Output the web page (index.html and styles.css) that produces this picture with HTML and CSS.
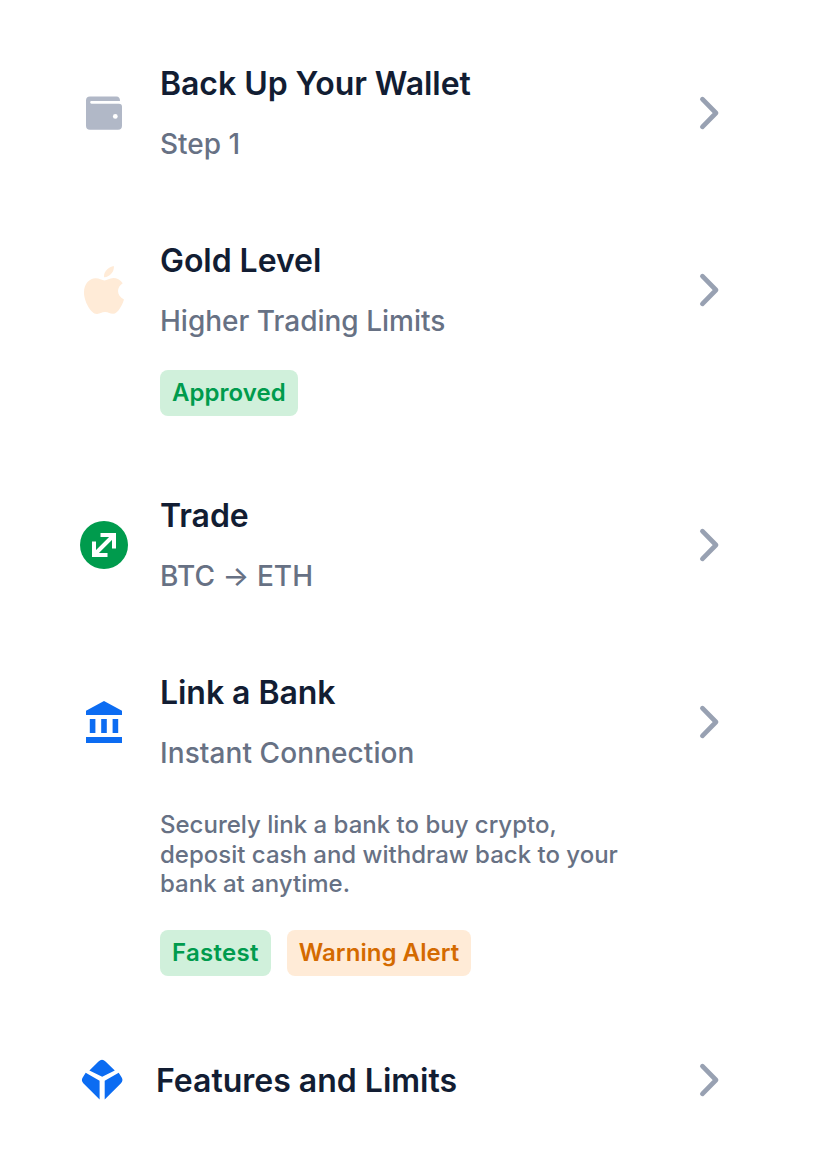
FILE: index.html
```html
<!DOCTYPE html>
<html lang="en">
<head>
<meta charset="utf-8">
<title>Wallet actions</title>
<link rel="stylesheet" href="styles.css">
</head>
<body>
<svg class="defs" width="0" height="0"><symbol id="chevron" viewBox="0 0 24 36"><path d="M6.4 4.2L20 18L6.4 31.8" fill="none" stroke="#98a1b2" stroke-width="4.7" stroke-linecap="round" stroke-linejoin="round"/></symbol></svg>
<main class="list">
  <section class="row">
    <svg class="icon" viewBox="0 0 48 48"><path fill="#b1b8c7" d="M10 7.4h26.500Q40 7.400 40 12H11.500a1.350 1.350 0 0 0 0 2.700H39a3 3 0 0 1 3 3v19a4 4 0 0 1-4 4H10a4 4 0 0 1-4-4V11.400a4 4 0 0 1 4-4z"/><circle cx="35.3" cy="27.4" r="2.4" fill="#fff"/></svg>
    <div class="body"><h2>Back Up Your Wallet</h2><p class="sub">Step 1</p></div>
    <svg class="chevron"><use href="#chevron"/></svg>
  </section>
  <section class="row tagged">
    <svg class="icon" viewBox="0 0 48 48"><path fill="#ffebd7" d="M33.8 0C34.7 5.500 29.500 11.500 24.100 11.200C23.300 5.800 28.500.700 33.800 0zM42.700 17.200C36 21.500 36.600 30.200 44 33.400C42.500 38.500 37.900 47.700 33.100 47.800C30 47.900 28.700 46 25.100 46C21.500 46 20 47.800 17.100 48C11 48.200 4 35.500 4 26.500C4 17.500 9.700 12.400 15.500 12.300C19.100 12.200 22 14.500 24.500 14.500C26.900 14.500 29.500 12 33.500 12C36.500 12 40.500 13.700 42.700 17.200z"/></svg>
    <div class="body"><h2>Gold Level</h2><p class="sub">Higher Trading Limits</p><div class="tags"><span class="tag success">Approved</span></div></div>
    <svg class="chevron"><use href="#chevron"/></svg>
  </section>
  <section class="row">
    <svg class="icon" viewBox="0 0 48 48"><circle cx="24" cy="24" r="24" fill="#009b4d"/><path d="M20.500 14h13.500v13.500M14 20.500v13.500h13.500M14.500 33.500L33.500 14.500" fill="none" stroke="#fff" stroke-width="4"/></svg>
    <div class="body"><h2>Trade</h2><p class="sub wide">BTC → ETH</p></div>
    <svg class="chevron"><use href="#chevron"/></svg>
  </section>
  <section class="row linked">
    <svg class="icon" viewBox="0 0 48 48"><path fill="#0c6cf2" d="M24 3l18 9.700V17H6v-4.300zM9.800 21h5.600v14H9.800zM21.200 21h5.600v14h-5.600zM32.600 21h5.600v14h-5.600zM6 39h36v6H6z"/></svg>
    <div class="body"><h2>Link a Bank</h2><p class="sub wide">Instant Connection</p><p class="text">Securely link a bank to buy crypto, deposit cash and withdraw back to your bank at anytime.</p><div class="tags"><span class="tag success compact">Fastest</span><span class="tag warning">Warning Alert</span></div></div>
    <svg class="chevron"><use href="#chevron"/></svg>
  </section>
  <section class="row simple">
    <svg class="icon" viewBox="0 0 44 48"><path fill="#0c6cf2" d="M9.400 14.600L18.500 5.400Q22 2 25.500 5.400L34.800 14.600L22.200 20.700zM5.700 16.700L19.600 24.700V43.400L3.300 27.200Q.800 24.400 2.700 21.500zM38.700 16.700L24.700 24.700V43.400L41 27.200Q43.500 24.400 41.700 21.500z"/></svg>
    <div class="body"><h2>Features and Limits</h2></div>
    <svg class="chevron"><use href="#chevron"/></svg>
  </section>
</main>
</body>
</html>
```
FILE: styles.css
```css
* { box-sizing: border-box; }
body { margin: 0; background: #fff; font-family: Inter, sans-serif; }
.defs { position: absolute; }
.list { display: flex; flex-direction: column; padding: 60px 94px 0 80px; gap: 69px; }
.row { display: flex; align-items: flex-start; }
.icon { width: 48px; height: 48px; margin: 29px 32px 0 0; flex: none; }
.body { width: 480px; }
h2 { margin: 0; font-size: 32px; line-height: 48px; font-weight: 600; letter-spacing: -0.05px; color: #121d33; white-space: nowrap; }
.sub { margin: 12px 0 0; font-size: 28px; line-height: 48px; color: #677184; font-weight: 500; }
.sub.wide { letter-spacing: 0.08px; }
.text { margin: 33px 0 0; font-size: 24px; line-height: 29.5px; color: #677184; font-weight: 500; }
.tags { display: flex; gap: 16px; margin-top: 25px; }
.linked .tags { margin-top: 31px; }
.tagged { padding-bottom: 7px; }
.linked { padding-bottom: 11px; }
.tag { height: 46px; padding: 0 12px; border-radius: 8px; font-size: 24px; line-height: 46px; font-weight: 600; letter-spacing: 0.05px; }
.compact { letter-spacing: 0.3px; }
.success { background: #d0f0db; color: #009b4d; }
.warning { background: #ffebd7; color: #d46a00; }
.chevron { width: 24px; height: 36px; margin: 35px 0 0 auto; flex: none; }
.simple { height: 48px; }
.simple h2 { padding-top: 1px; letter-spacing: 0; }
.simple .icon { width: 44px; margin-top: 0; }
.simple .chevron { margin-top: 6px; }
```
